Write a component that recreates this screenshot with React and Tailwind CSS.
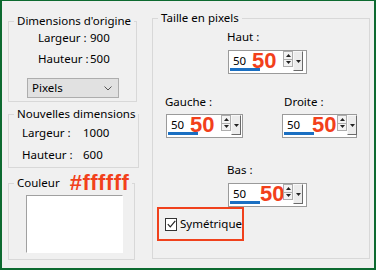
import React from "react";

// Red annotation text laid over the dialog
const red = "font-bold text-[#f2401b] [font-family:'Liberation_Sans',Arial,sans-serif]";

function InfoRow({ label, value, labelWidth }) {
  return (
    <div className="flex h-4 items-center leading-4 whitespace-nowrap">
      <span className={labelWidth}>{label}</span>
      <span>{value}</span>
    </div>
  );
}

function Spinner({ redLeft, width = "w-[78px]" }) {
  return (
    <div className={`relative h-6 ${width} border border-[#9a9a9a] bg-white`}>
      <span className="absolute left-[4px] top-[2px] leading-4">50</span>
      <div className="absolute left-[1px] top-[17px] h-[3px] w-[30px] bg-[#1a6fc2]" />
      <span className={`absolute top-[-3px] text-[22px] leading-[26px] ${red} ${redLeft}`}>50</span>
      {/* up / down arrows */}
      <div className="absolute left-[54px] top-0 flex h-[16px] w-[10px] flex-col border border-[#adadad] bg-[#f3f3f3]">
        <div className="flex flex-1 items-center justify-center border-b border-[#adadad]">
          <svg width="5" height="3" viewBox="0 0 5 3"><path d="M2.5 0L5 3H0z" fill="#222" /></svg>
        </div>
        <div className="flex flex-1 items-center justify-center">
          <svg width="5" height="3" viewBox="0 0 5 3"><path d="M0 0h5L2.5 3z" fill="#222" /></svg>
        </div>
      </div>
      {/* drop button */}
      <div className="absolute left-[64px] top-0 flex h-[20px] w-[10px] items-center justify-center border border-[#f8f8f8] border-r-[#6a6a6a] border-b-[#6a6a6a] bg-[#ececec]">
        <svg width="5" height="3" viewBox="0 0 5 3"><path d="M0 0h5L2.5 3z" fill="#222" /></svg>
      </div>
    </div>
  );
}

export default function App() {
  return (
    <div
      className="flex h-[270px] w-[376px] items-start gap-[15px] overflow-hidden border-2 border-t border-[#0d6a30] bg-[#f0f0f0] pl-[6px] pt-[9px] text-[11.5px] text-black"
      style={{ fontFamily: "'Noto Sans', 'Segoe UI', sans-serif" }}
    >
      {/* Left column */}
      <div className="mt-[3px] flex w-[129px] flex-col">
        <fieldset className="h-[89px] border border-[#d8d8d8]">
          <legend className="ml-[5px] whitespace-nowrap px-[3px] leading-4">Dimensions d'origine</legend>
          <div className="flex flex-col gap-[5px] pl-[29px] pt-[1px]">
            <InfoRow label="Largeur :" value="900" labelWidth="w-[52px]" />
            <InfoRow label="Hauteur :" value="500" labelWidth="w-[52px]" />
          </div>
          <div className="ml-[18px] mt-[11px] flex h-5 w-[92px] items-center justify-between border border-[#adadad] bg-[#e1e1e1] pl-[4px] pr-[6px]">
            <span className="leading-4">Pixels</span>
            <svg width="8" height="5" viewBox="0 0 8 5">
              <path d="M0.5 0.5L4 4L7.5 0.5" fill="none" stroke="#555" strokeWidth="1" />
            </svg>
          </div>
        </fieldset>

        <fieldset className="mt-[4px] h-[62px] w-[127px] border border-[#d8d8d8]">
          <legend className="ml-[5px] whitespace-nowrap px-[3px] leading-4">Nouvelles dimensions</legend>
          <div className="flex flex-col gap-[6px] pl-[13px] pt-[3px]">
            <InfoRow label="Largeur :" value="1000" labelWidth="w-[61px]" />
            <InfoRow label="Hauteur :" value="600" labelWidth="w-[61px]" />
          </div>
        </fieldset>

        <fieldset className="mt-[7px] h-[85px] w-[127px] border border-[#d8d8d8]">
          <legend className="ml-[5px] flex h-4 items-center whitespace-nowrap px-[3px]">
            <span className="leading-4">Couleur</span>
            <span className={`ml-[10px] text-[22px] leading-4 tracking-[0.5px] ${red}`}>#ffffff</span>
          </legend>
          <div className="ml-[17px] mt-[4px] h-[58px] w-[97px] border border-[#a0a0a0] border-r-white border-b-white bg-white" />
        </fieldset>
      </div>

      {/* Right column */}
      <fieldset className="h-[249px] w-[218px] border border-[#d8d8d8]">
        <legend className="ml-[5px] whitespace-nowrap px-[3px] leading-4">Taille en pixels</legend>
        <div className="flex flex-col">
          <div className="ml-[74px] mt-[3px] leading-4">Haut :</div>
          <div className="ml-[75px] mt-[5px]">
            <Spinner redLeft="left-[23px]" width="w-[79px]" />
          </div>

          <div className="mt-[20px] flex">
            <div className="ml-[12px] flex w-[117px] flex-col">
              <div className="leading-4">Gauche :</div>
              <div className="ml-[1px] mt-[4px]">
                <Spinner redLeft="left-[23px]" width="w-[77px]" />
              </div>
            </div>
            <div className="flex flex-col">
              <div className="ml-[2px] leading-4">Droite :</div>
              <div className="mt-[4px]">
                <Spinner redLeft="left-[29px]" width="w-[75px]" />
              </div>
            </div>
          </div>

          <div className="ml-[74px] mt-[24px] leading-4">Bas :</div>
          <div className="ml-[75px] mt-[5px]">
            <Spinner redLeft="left-[31px]" width="w-[79px]" />
          </div>

          <div className="ml-[4px] flex h-[34px] w-[87px] items-center gap-[3px] border-2 border-[#f0411c] pl-[6px]">
            <div className="flex h-[13px] w-[13px] items-center justify-center border border-[#333] bg-white">
              <svg width="9" height="8" viewBox="0 0 9 8">
                <path d="M0.8 4.2L3.3 6.8L8.3 0.8" fill="none" stroke="#222" strokeWidth="1.2" />
              </svg>
            </div>
            <span className="leading-4">Symétrique</span>
          </div>
        </div>
      </fieldset>
    </div>
  );
}
